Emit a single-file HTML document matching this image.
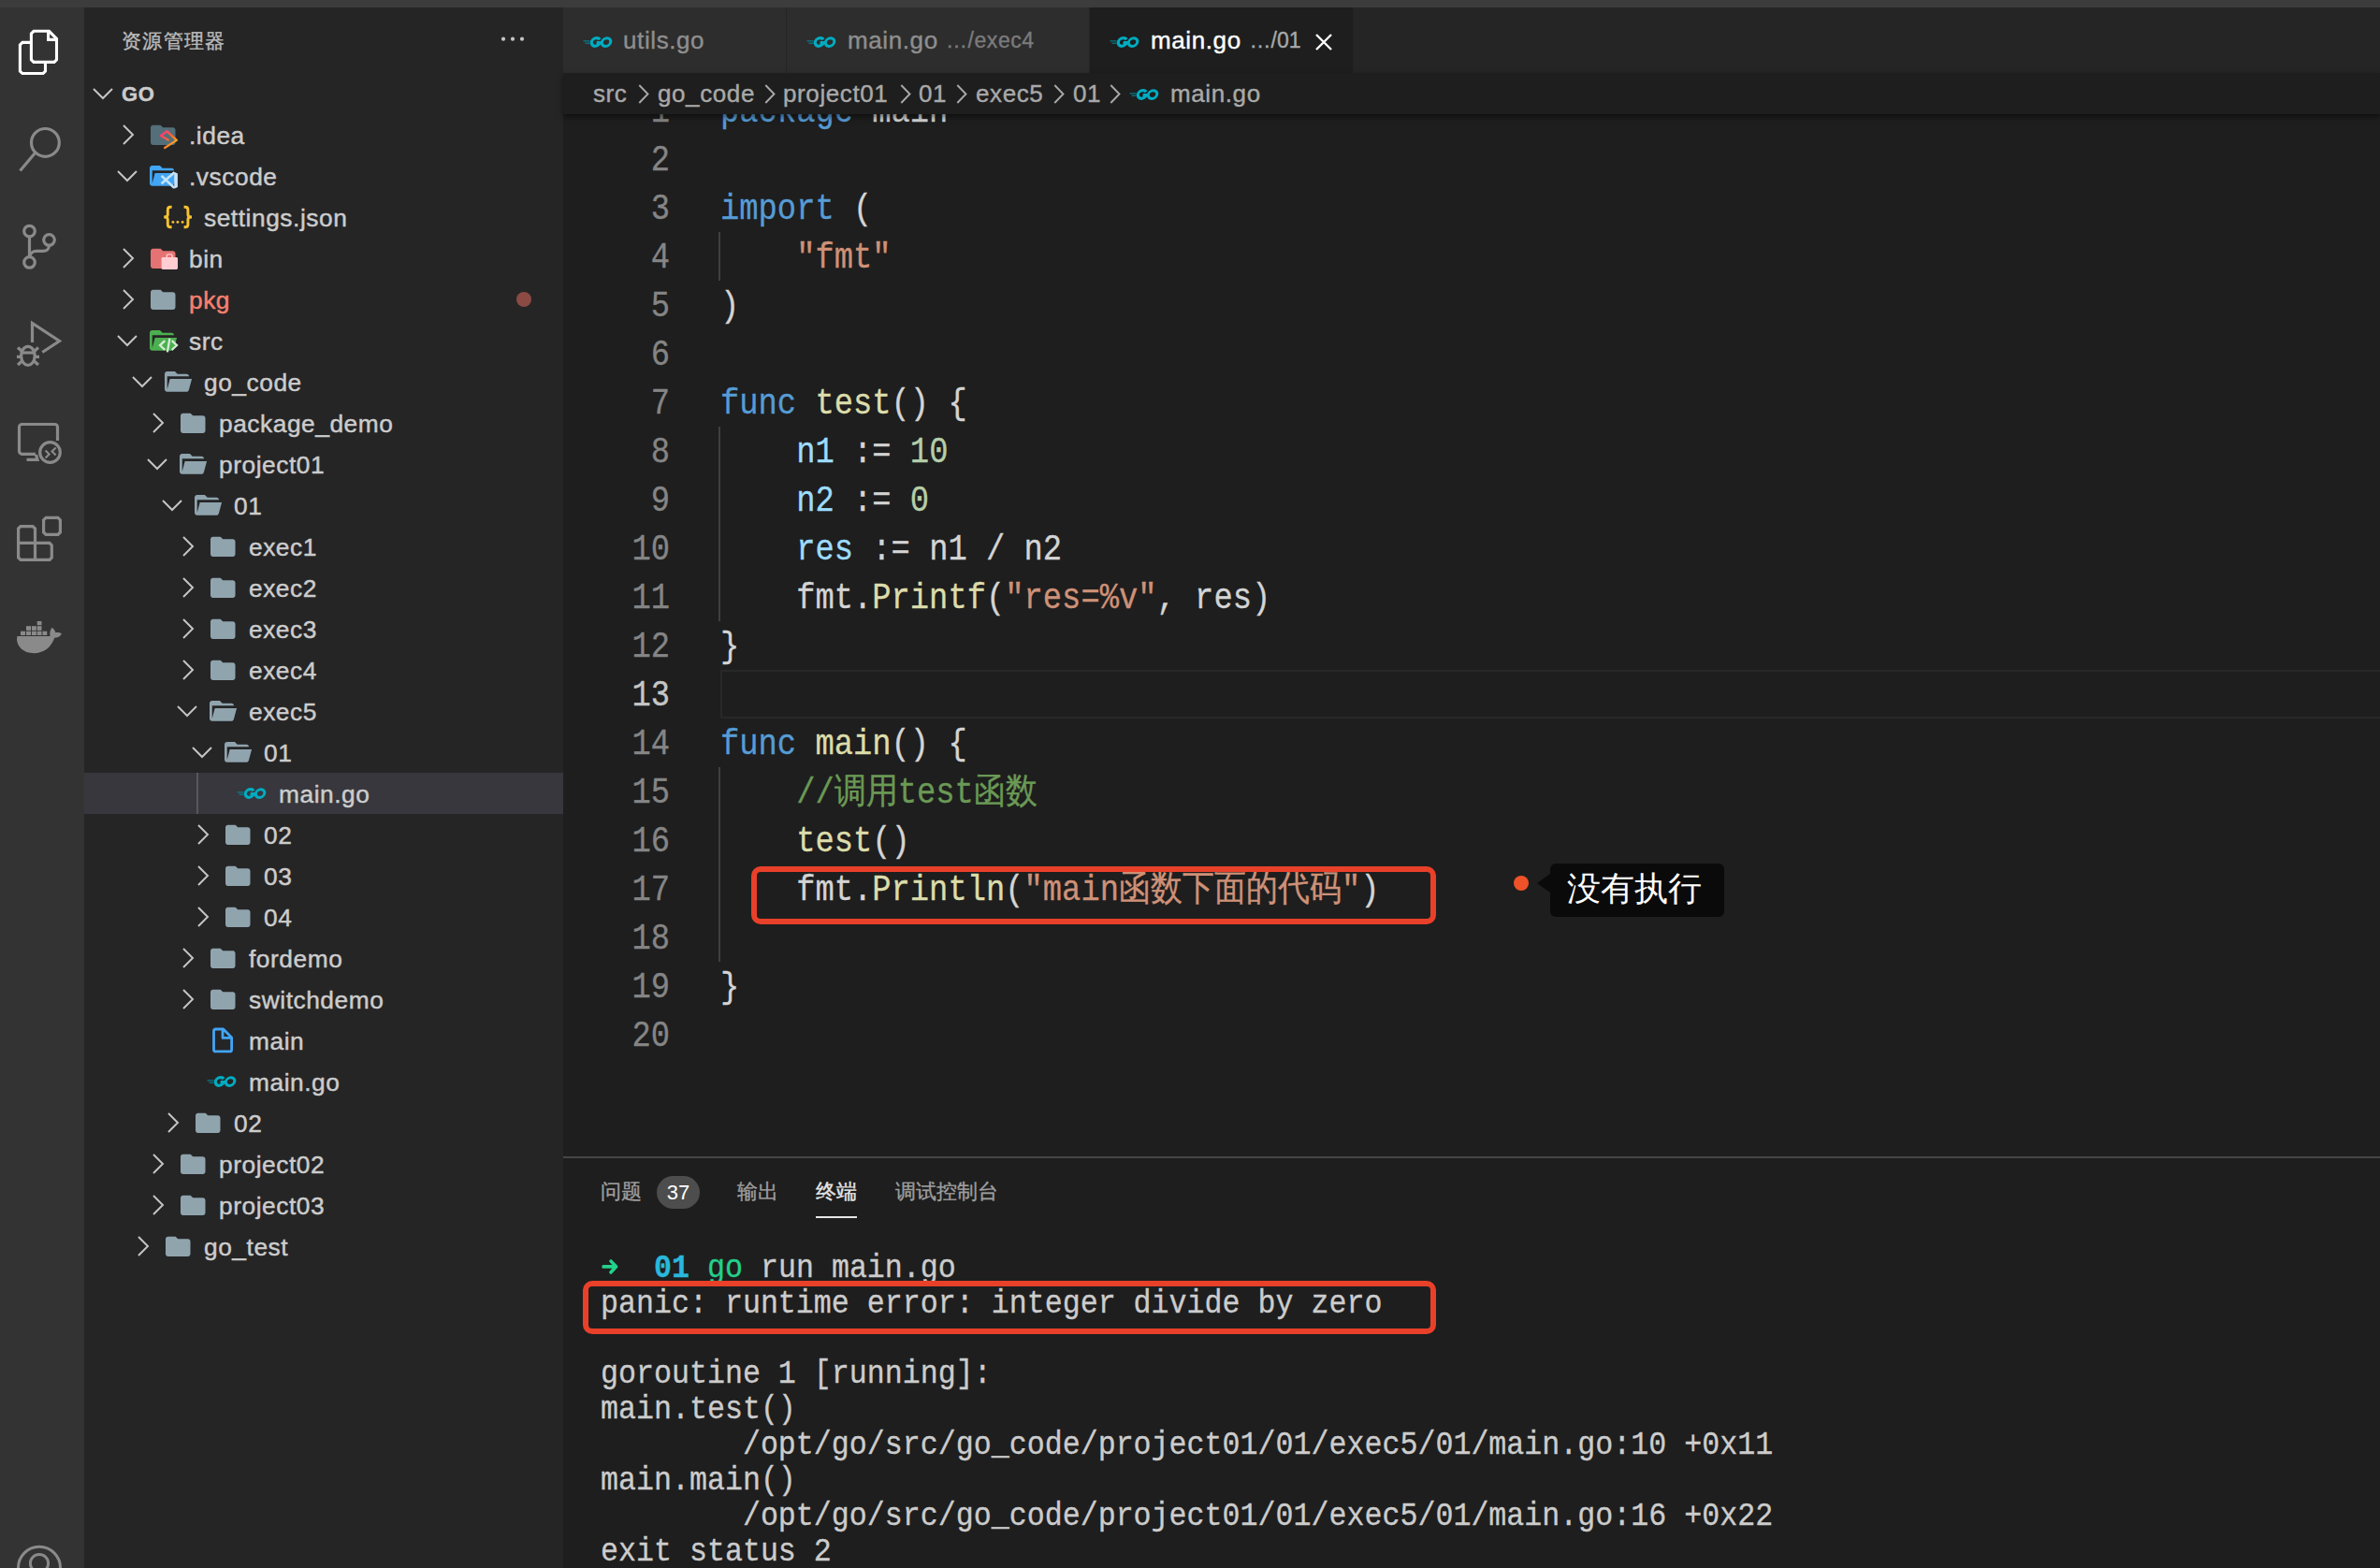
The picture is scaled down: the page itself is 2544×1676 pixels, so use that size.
<!DOCTYPE html>
<html><head><meta charset="utf-8"><style>
*{box-sizing:border-box}
html,body{margin:0;padding:0;width:2544px;height:1676px;overflow:hidden;background:#1e1e1e;font-family:"Liberation Sans",sans-serif}
.abs{position:absolute}
#topbar{position:absolute;left:0;top:0;width:2544px;height:8px;background:#3c3c3c}
#act{position:absolute;left:0;top:8px;width:90px;height:1668px;background:#333333}
#act svg{position:absolute}
#side{position:absolute;left:90px;top:8px;width:512px;height:1668px;background:#252526;overflow:hidden}
.row{position:absolute;left:90px;width:512px;height:44px}
.row.sel{background:#37373d}
.row span{position:absolute}
.ch svg,.ic svg{display:block}
.lbl{top:1px;line-height:44px;font-size:26.3px;letter-spacing:0.55px;color:#cccccc;white-space:nowrap;-webkit-text-stroke:0.45px currentColor}
.guide{left:120px;top:0;width:2px;height:44px;background:#585858}
.dot{left:462px;top:14px;width:16px;height:16px;border-radius:50%;background:#8b4a44}
.jsonic{color:#f5c033;font-size:30px;font-family:"Liberation Mono",monospace;letter-spacing:-2px;line-height:36px}
#tabs{position:absolute;left:602px;top:8px;width:1942px;height:70px;background:#252526}
.tab{position:absolute;top:0;height:70px;background:#2d2d2d}
.tab span,.tab svg{position:absolute}
.tabt{font-size:26px;letter-spacing:0.6px;line-height:70px;top:0;white-space:nowrap;-webkit-text-stroke:0.4px currentColor}
#crumbs{position:absolute;left:602px;top:78px;width:1942px;height:44px;background:#1e1e1e;z-index:3;box-shadow:0 3px 6px rgba(0,0,0,0.5)}
#crumbs span,#crumbs svg{position:absolute}
.cr{font-size:26px;letter-spacing:0.6px;line-height:44px;top:0;color:#a9a9a9;white-space:nowrap;-webkit-text-stroke:0.4px currentColor}
#editor{position:absolute;left:602px;top:122px;width:1942px;height:1114px;overflow:hidden;background:#1e1e1e}
.ln{position:absolute;left:0;width:114px;text-align:right;font-family:"Liberation Mono",monospace;font-size:33.8px;line-height:52px;height:52px;color:#858585;margin-top:-122px;transform:scaleY(1.12);transform-origin:0 35.3px;-webkit-text-stroke:0.3px currentColor}
.ln.act{color:#c6c6c6}
.cl{position:absolute;left:168px;font-family:"Liberation Mono",monospace;font-size:33.8px;line-height:52px;height:52px;color:#d4d4d4;white-space:pre;margin-top:-122px;transform:scaleY(1.12);transform-origin:0 35.3px;-webkit-text-stroke:0.3px currentColor}
#panel{position:absolute;left:602px;top:1236px;width:1942px;height:440px;background:#1e1e1e;border-top:2px solid #464646}
#panel span{position:absolute;white-space:pre}
.term{position:absolute;left:40px;height:38px;font-family:"Liberation Mono",monospace;font-size:31.65px;line-height:38px;color:#cccccc;white-space:pre;transform:scaleY(1.1);transform-origin:0 27.4px;-webkit-text-stroke:0.3px currentColor}
</style></head><body>
<div id="topbar"></div>
<div id="act">
<svg style="left:0;top:0" width="90" height="1668" viewBox="0 8 90 1668">
<g fill="none" stroke="#ffffff" stroke-width="3.1" stroke-linejoin="miter">
<path d="M36 33.3 H52.5 L60.5 41.3 V63.9 L58 66.4 H36 L33.4 63.9 V35.9 Z"/>
<path d="M51.6 33.3 V42.4 H60.5"/>
<path d="M33.4 45.4 H24 L21.4 48 V76 L24 78.5 H46 L48.5 76 V66.4"/>
</g>
<g fill="none" stroke="#8a8a8a" stroke-width="3.2">
<circle cx="48.4" cy="152.4" r="14.9"/>
<path d="M37.5 163.5 L21.5 182.5"/>
<circle cx="31.5" cy="247.1" r="5.8"/>
<circle cx="31.5" cy="280.4" r="5.8"/>
<circle cx="52.5" cy="256.4" r="5.8"/>
<path d="M31.5 253 V274.5"/>
<path d="M52.5 262.3 C52.5 266 50 268.4 46 268.4 H39 C35 268.4 32 271 32 274.5"/>
<path d="M34.5 366 V345.5 L63.5 364.5 L45.3 376.5"/>
<ellipse cx="29.9" cy="380.3" rx="7.3" ry="10"/>
<path d="M22 377 H37.8"/>
<path d="M19 371.5 L23.5 375.5 M41 371.5 L36.5 375.5 M18 381.3 H22 M38 381.3 H42 M19 390 L23.5 386 M41 390 L36.5 386"/>
<path d="M38 485.3 H23.5 a3 3 0 0 1 -3 -3 V456.5 a3 3 0 0 1 3 -3 H58.5 a3 3 0 0 1 3 3 V471"/>
<path d="M38.5 486 L40 491.3 H28.5"/>
<circle cx="53.5" cy="483.5" r="10.8"/>
<path d="M48.6 481.5 L52.6 485.5 L48.6 489.5 M59.6 478.5 L55.6 482.5 L59.6 486.5" stroke-width="2.2"/>
<path d="M19.6 565 L22 562.6 H35 L37.5 565 V580.4 H53 L55.3 582.8 V596 L53 598.4 H22 L19.6 596 Z"/>
<path d="M19.6 580.4 H37.5 V598.4"/>
<path d="M49 553.4 H62 L64.4 555.8 V569 L62 571.4 H49 L46.6 569 V555.8 Z"/>
</g>
<g fill="#8a8a8a">
<path d="M18.5 680 H53.6 C53 677.5 53.2 673.8 55.5 670.7 C57.5 672.3 59.2 674 59.3 676.2 C61.5 675.8 64 676 66 677.2 C64.5 680.5 61.5 681.8 58.3 681.8 C54.5 692.5 46.5 698.2 36.3 698.2 C24.5 698.2 18 690.5 18 683 Z"/>
<rect x="22" y="674.7" width="5" height="4.3"/><rect x="28" y="674.7" width="5" height="4.3"/><rect x="33.9" y="674.7" width="5" height="4.3"/><rect x="39.7" y="674.7" width="4.8" height="4.3"/><rect x="45.5" y="674.7" width="4.8" height="4.3"/>
<rect x="28" y="669.2" width="5" height="4.6"/><rect x="33.9" y="669.2" width="5" height="4.6"/><rect x="39.7" y="669.2" width="4.8" height="4.6"/>
<rect x="39.7" y="664" width="4.8" height="4.2"/>
</g>
<g fill="none" stroke="#8a8a8a" stroke-width="3">
<circle cx="42" cy="1675.8" r="22.5"/>
<circle cx="42" cy="1671" r="9.6"/>
</g>
</svg>

</div>
<div id="side">
<span class="abs" style="left:40px;top:22px;font-size:21px;color:#bbbbbb;letter-spacing:1.35px;-webkit-text-stroke:0.4px currentColor">资源管理器</span>
<svg class="abs" style="left:444px;top:30px" width="30" height="8" viewBox="0 0 30 8"><g fill="#c5c5c5"><circle cx="4" cy="3.7" r="2.1"/><circle cx="14" cy="3.7" r="2.1"/><circle cx="24" cy="3.7" r="2.1"/></g></svg>
<div class="row" style="top:70px;left:0">
<span class="ch" style="left:9px;top:15px"><svg class="chev" width="22" height="14" viewBox="0 0 22 14"><path d="M1 2 L11 12 L21 2" fill="none" stroke="#c5c5c5" stroke-width="1.95"/></svg></span>
<span class="lbl" style="left:40px;font-weight:bold;font-size:22px">GO</span>
</div>
<div style="position:absolute;left:-90px;top:-8px;width:602px">
<div class="row" style="top:122px"><span class="ch" style="left:40px;top:11px"><svg class="chev" width="14" height="22" viewBox="0 0 14 22"><path d="M2 1 L12 11 L2 21" fill="none" stroke="#c5c5c5" stroke-width="1.95"/></svg></span><span class="ic" style="left:71px;top:10.7px"><svg width="26.5" height="22" viewBox="2 3.5 20 16.5" preserveAspectRatio="none"><path d="M10 4H4c-1.1 0-2 .9-2 2v12c0 1.1.9 2 2 2h16c1.1 0 2-.9 2-2V8c0-1.1-.9-2-2-2h-8l-2-2z" fill="#546e7a"/></svg></span><span style="left:70px;top:0"><svg width="40" height="44" viewBox="160 122 40 44" style="display:block;overflow:visible"><defs><linearGradient id="ideag" x1="0" y1="0" x2="1" y2="1"><stop offset="0" stop-color="#ff2e8a"/><stop offset="0.5" stop-color="#ff6a2a"/><stop offset="1" stop-color="#ffd01a"/></linearGradient></defs><path d="M179.7 149.6 L171.8 145.1 L178.5 140.3 L188.8 149.9 L176.1 158" fill="none" stroke="url(#ideag)" stroke-width="2.3" stroke-linejoin="round" stroke-linecap="round"/></svg></span><span class="lbl" style="left:112px">.idea</span></div>
<div class="row" style="top:166px"><span class="ch" style="left:35px;top:15px"><svg class="chev" width="22" height="14" viewBox="0 0 22 14"><path d="M1 2 L11 12 L21 2" fill="none" stroke="#c5c5c5" stroke-width="1.95"/></svg></span><span class="ic" style="left:70px;top:10.4px"><svg width="29" height="23" viewBox="2 3.5 21.2 16.5"><path d="M19 20H4c-1.11 0-2-.9-2-2V6c0-1.11.89-2 2-2h6l2 2h7a2 2 0 0 1 2 2H4v10l2.14-8h17.07l-2.28 8.5c-.23.87-1.01 1.5-1.93 1.5z" fill="#42a5f5"/></svg></span><span style="left:70px;top:0"><svg width="40" height="44" viewBox="160 166 40 44" style="display:block;overflow:visible"><path d="M186.2 183.8 L189.9 185.6 V199.9 L186.2 201.7 Z" fill="#c6e3fa"/><path d="M172.6 187.9 L186.2 200.8 M172.6 196.3 L186.4 184.3" stroke="#c6e3fa" stroke-width="2.6"/></svg></span><span class="lbl" style="left:112px">.vscode</span></div>
<div class="row" style="top:210px"><span class="ic" style="left:84px;top:9px"><svg width="34" height="28" viewBox="0 0 34 28"><g fill="none" stroke="#f7c22f" stroke-width="2.9"><path d="M9.6 2.3 H8.2 C6.1 2.3 5.3 3.3 5.3 5.3 V10.6 C5.3 12.1 4.2 13 1.2 13 C4.2 13 5.3 13.9 5.3 15.4 V20.9 C5.3 22.9 6.1 23.7 8.2 23.7 H9.6"/><path d="M 22.6 2.3 H 24 C 26.1 2.3 26.9 3.3 26.9 5.3 V 10.6 C 26.9 12.1 28 13 31 13 C 28 13 26.9 13.9 26.9 15.4 V 20.9 C 26.9 22.9 26.1 23.7 24 23.7 H 22.6"/></g><g fill="#f7c22f"><circle cx="10.9" cy="18.4" r="1.45"/><circle cx="15.9" cy="18.4" r="1.45"/><circle cx="21.1" cy="18.4" r="1.45"/></g></svg></span><span class="lbl" style="left:128px">settings.json</span></div>
<div class="row" style="top:254px"><span class="ch" style="left:40px;top:11px"><svg class="chev" width="14" height="22" viewBox="0 0 14 22"><path d="M2 1 L12 11 L2 21" fill="none" stroke="#c5c5c5" stroke-width="1.95"/></svg></span><span class="ic" style="left:71px;top:10.7px"><svg width="26.5" height="22" viewBox="2 3.5 20 16.5" preserveAspectRatio="none"><path d="M10 4H4c-1.1 0-2 .9-2 2v12c0 1.1.9 2 2 2h16c1.1 0 2-.9 2-2V8c0-1.1-.9-2-2-2h-8l-2-2z" fill="#e57373"/></svg></span><span style="left:70px;top:0"><svg width="40" height="44" viewBox="160 254 40 44" style="display:block;overflow:visible"><rect x="172.6" y="274.9" width="17.4" height="13" rx="1.4" fill="#ffcdd2"/><rect x="178.3" y="271.9" width="5.8" height="4.2" rx="1.6" fill="none" stroke="#ffcdd2" stroke-width="1.4"/></svg></span><span class="lbl" style="left:112px">bin</span></div>
<div class="row" style="top:298px"><span class="ch" style="left:40px;top:11px"><svg class="chev" width="14" height="22" viewBox="0 0 14 22"><path d="M2 1 L12 11 L2 21" fill="none" stroke="#c5c5c5" stroke-width="1.95"/></svg></span><span class="ic" style="left:71px;top:10.7px"><svg width="26.5" height="22" viewBox="2 3.5 20 16.5" preserveAspectRatio="none"><path d="M10 4H4c-1.1 0-2 .9-2 2v12c0 1.1.9 2 2 2h16c1.1 0 2-.9 2-2V8c0-1.1-.9-2-2-2h-8l-2-2z" fill="#90a4ae"/></svg></span><span class="lbl" style="left:112px;color:#f88070">pkg</span><span class="dot"></span></div>
<div class="row" style="top:342px"><span class="ch" style="left:35px;top:15px"><svg class="chev" width="22" height="14" viewBox="0 0 22 14"><path d="M1 2 L11 12 L21 2" fill="none" stroke="#c5c5c5" stroke-width="1.95"/></svg></span><span class="ic" style="left:70px;top:10.4px"><svg width="29" height="23" viewBox="2 3.5 21.2 16.5"><path d="M19 20H4c-1.11 0-2-.9-2-2V6c0-1.11.89-2 2-2h6l2 2h7a2 2 0 0 1 2 2H4v10l2.14-8h17.07l-2.28 8.5c-.23.87-1.01 1.5-1.93 1.5z" fill="#4caf50"/></svg></span><span style="left:70px;top:0"><svg width="40" height="44" viewBox="160 342 40 44" style="display:block;overflow:visible"><path d="M176.3 364.2 L171 369.1 L176.3 374 M181.4 361.8 L178.9 376.4 M183.7 364.2 L189 369.1 L183.7 374" fill="none" stroke="#d4ecd5" stroke-width="2.3"/></svg></span><span class="lbl" style="left:112px">src</span></div>
<div class="row" style="top:386px"><span class="ch" style="left:51px;top:15px"><svg class="chev" width="22" height="14" viewBox="0 0 22 14"><path d="M1 2 L11 12 L21 2" fill="none" stroke="#c5c5c5" stroke-width="1.95"/></svg></span><span class="ic" style="left:86px;top:10.4px"><svg width="29" height="23" viewBox="2 3.5 21.2 16.5"><path d="M19 20H4c-1.11 0-2-.9-2-2V6c0-1.11.89-2 2-2h6l2 2h7a2 2 0 0 1 2 2H4v10l2.14-8h17.07l-2.28 8.5c-.23.87-1.01 1.5-1.93 1.5z" fill="#90a4ae"/></svg></span><span class="lbl" style="left:128px">go_code</span></div>
<div class="row" style="top:430px"><span class="ch" style="left:72px;top:11px"><svg class="chev" width="14" height="22" viewBox="0 0 14 22"><path d="M2 1 L12 11 L2 21" fill="none" stroke="#c5c5c5" stroke-width="1.95"/></svg></span><span class="ic" style="left:103px;top:10.7px"><svg width="26.5" height="22" viewBox="2 3.5 20 16.5" preserveAspectRatio="none"><path d="M10 4H4c-1.1 0-2 .9-2 2v12c0 1.1.9 2 2 2h16c1.1 0 2-.9 2-2V8c0-1.1-.9-2-2-2h-8l-2-2z" fill="#90a4ae"/></svg></span><span class="lbl" style="left:144px">package_demo</span></div>
<div class="row" style="top:474px"><span class="ch" style="left:67px;top:15px"><svg class="chev" width="22" height="14" viewBox="0 0 22 14"><path d="M1 2 L11 12 L21 2" fill="none" stroke="#c5c5c5" stroke-width="1.95"/></svg></span><span class="ic" style="left:102px;top:10.4px"><svg width="29" height="23" viewBox="2 3.5 21.2 16.5"><path d="M19 20H4c-1.11 0-2-.9-2-2V6c0-1.11.89-2 2-2h6l2 2h7a2 2 0 0 1 2 2H4v10l2.14-8h17.07l-2.28 8.5c-.23.87-1.01 1.5-1.93 1.5z" fill="#90a4ae"/></svg></span><span class="lbl" style="left:144px">project01</span></div>
<div class="row" style="top:518px"><span class="ch" style="left:83px;top:15px"><svg class="chev" width="22" height="14" viewBox="0 0 22 14"><path d="M1 2 L11 12 L21 2" fill="none" stroke="#c5c5c5" stroke-width="1.95"/></svg></span><span class="ic" style="left:118px;top:10.4px"><svg width="29" height="23" viewBox="2 3.5 21.2 16.5"><path d="M19 20H4c-1.11 0-2-.9-2-2V6c0-1.11.89-2 2-2h6l2 2h7a2 2 0 0 1 2 2H4v10l2.14-8h17.07l-2.28 8.5c-.23.87-1.01 1.5-1.93 1.5z" fill="#90a4ae"/></svg></span><span class="lbl" style="left:160px">01</span></div>
<div class="row" style="top:562px"><span class="ch" style="left:104px;top:11px"><svg class="chev" width="14" height="22" viewBox="0 0 14 22"><path d="M2 1 L12 11 L2 21" fill="none" stroke="#c5c5c5" stroke-width="1.95"/></svg></span><span class="ic" style="left:135px;top:10.7px"><svg width="26.5" height="22" viewBox="2 3.5 20 16.5" preserveAspectRatio="none"><path d="M10 4H4c-1.1 0-2 .9-2 2v12c0 1.1.9 2 2 2h16c1.1 0 2-.9 2-2V8c0-1.1-.9-2-2-2h-8l-2-2z" fill="#90a4ae"/></svg></span><span class="lbl" style="left:176px">exec1</span></div>
<div class="row" style="top:606px"><span class="ch" style="left:104px;top:11px"><svg class="chev" width="14" height="22" viewBox="0 0 14 22"><path d="M2 1 L12 11 L2 21" fill="none" stroke="#c5c5c5" stroke-width="1.95"/></svg></span><span class="ic" style="left:135px;top:10.7px"><svg width="26.5" height="22" viewBox="2 3.5 20 16.5" preserveAspectRatio="none"><path d="M10 4H4c-1.1 0-2 .9-2 2v12c0 1.1.9 2 2 2h16c1.1 0 2-.9 2-2V8c0-1.1-.9-2-2-2h-8l-2-2z" fill="#90a4ae"/></svg></span><span class="lbl" style="left:176px">exec2</span></div>
<div class="row" style="top:650px"><span class="ch" style="left:104px;top:11px"><svg class="chev" width="14" height="22" viewBox="0 0 14 22"><path d="M2 1 L12 11 L2 21" fill="none" stroke="#c5c5c5" stroke-width="1.95"/></svg></span><span class="ic" style="left:135px;top:10.7px"><svg width="26.5" height="22" viewBox="2 3.5 20 16.5" preserveAspectRatio="none"><path d="M10 4H4c-1.1 0-2 .9-2 2v12c0 1.1.9 2 2 2h16c1.1 0 2-.9 2-2V8c0-1.1-.9-2-2-2h-8l-2-2z" fill="#90a4ae"/></svg></span><span class="lbl" style="left:176px">exec3</span></div>
<div class="row" style="top:694px"><span class="ch" style="left:104px;top:11px"><svg class="chev" width="14" height="22" viewBox="0 0 14 22"><path d="M2 1 L12 11 L2 21" fill="none" stroke="#c5c5c5" stroke-width="1.95"/></svg></span><span class="ic" style="left:135px;top:10.7px"><svg width="26.5" height="22" viewBox="2 3.5 20 16.5" preserveAspectRatio="none"><path d="M10 4H4c-1.1 0-2 .9-2 2v12c0 1.1.9 2 2 2h16c1.1 0 2-.9 2-2V8c0-1.1-.9-2-2-2h-8l-2-2z" fill="#90a4ae"/></svg></span><span class="lbl" style="left:176px">exec4</span></div>
<div class="row" style="top:738px"><span class="ch" style="left:99px;top:15px"><svg class="chev" width="22" height="14" viewBox="0 0 22 14"><path d="M1 2 L11 12 L21 2" fill="none" stroke="#c5c5c5" stroke-width="1.95"/></svg></span><span class="ic" style="left:134px;top:10.4px"><svg width="29" height="23" viewBox="2 3.5 21.2 16.5"><path d="M19 20H4c-1.11 0-2-.9-2-2V6c0-1.11.89-2 2-2h6l2 2h7a2 2 0 0 1 2 2H4v10l2.14-8h17.07l-2.28 8.5c-.23.87-1.01 1.5-1.93 1.5z" fill="#90a4ae"/></svg></span><span class="lbl" style="left:176px">exec5</span></div>
<div class="row" style="top:782px"><span class="ch" style="left:115px;top:15px"><svg class="chev" width="22" height="14" viewBox="0 0 22 14"><path d="M1 2 L11 12 L21 2" fill="none" stroke="#c5c5c5" stroke-width="1.95"/></svg></span><span class="ic" style="left:150px;top:10.4px"><svg width="29" height="23" viewBox="2 3.5 21.2 16.5"><path d="M19 20H4c-1.11 0-2-.9-2-2V6c0-1.11.89-2 2-2h6l2 2h7a2 2 0 0 1 2 2H4v10l2.14-8h17.07l-2.28 8.5c-.23.87-1.01 1.5-1.93 1.5z" fill="#90a4ae"/></svg></span><span class="lbl" style="left:192px">01</span></div>
<div class="row sel" style="top:826px"><span class="ic" style="left:163px;top:15px"><svg width="34" height="14" viewBox="0 0 34 14"><path d="M0.5 5.9h7M2.5 8.2h5" stroke="#0090a0" stroke-width="1.0"/><g transform="skewX(-10)" fill="none" stroke="#00acc1" stroke-width="3.1"><ellipse cx="26.3" cy="7.1" rx="4.7" ry="4.35"/><path d="M18.9 4.2 A4.7 4.35 0 1 0 19.9 7.6 H15.9"/></g></svg></span><span class="lbl" style="left:208px">main.go</span><span class="guide"></span></div>
<div class="row" style="top:870px"><span class="ch" style="left:120px;top:11px"><svg class="chev" width="14" height="22" viewBox="0 0 14 22"><path d="M2 1 L12 11 L2 21" fill="none" stroke="#c5c5c5" stroke-width="1.95"/></svg></span><span class="ic" style="left:151px;top:10.7px"><svg width="26.5" height="22" viewBox="2 3.5 20 16.5" preserveAspectRatio="none"><path d="M10 4H4c-1.1 0-2 .9-2 2v12c0 1.1.9 2 2 2h16c1.1 0 2-.9 2-2V8c0-1.1-.9-2-2-2h-8l-2-2z" fill="#90a4ae"/></svg></span><span class="lbl" style="left:192px">02</span></div>
<div class="row" style="top:914px"><span class="ch" style="left:120px;top:11px"><svg class="chev" width="14" height="22" viewBox="0 0 14 22"><path d="M2 1 L12 11 L2 21" fill="none" stroke="#c5c5c5" stroke-width="1.95"/></svg></span><span class="ic" style="left:151px;top:10.7px"><svg width="26.5" height="22" viewBox="2 3.5 20 16.5" preserveAspectRatio="none"><path d="M10 4H4c-1.1 0-2 .9-2 2v12c0 1.1.9 2 2 2h16c1.1 0 2-.9 2-2V8c0-1.1-.9-2-2-2h-8l-2-2z" fill="#90a4ae"/></svg></span><span class="lbl" style="left:192px">03</span></div>
<div class="row" style="top:958px"><span class="ch" style="left:120px;top:11px"><svg class="chev" width="14" height="22" viewBox="0 0 14 22"><path d="M2 1 L12 11 L2 21" fill="none" stroke="#c5c5c5" stroke-width="1.95"/></svg></span><span class="ic" style="left:151px;top:10.7px"><svg width="26.5" height="22" viewBox="2 3.5 20 16.5" preserveAspectRatio="none"><path d="M10 4H4c-1.1 0-2 .9-2 2v12c0 1.1.9 2 2 2h16c1.1 0 2-.9 2-2V8c0-1.1-.9-2-2-2h-8l-2-2z" fill="#90a4ae"/></svg></span><span class="lbl" style="left:192px">04</span></div>
<div class="row" style="top:1002px"><span class="ch" style="left:104px;top:11px"><svg class="chev" width="14" height="22" viewBox="0 0 14 22"><path d="M2 1 L12 11 L2 21" fill="none" stroke="#c5c5c5" stroke-width="1.95"/></svg></span><span class="ic" style="left:135px;top:10.7px"><svg width="26.5" height="22" viewBox="2 3.5 20 16.5" preserveAspectRatio="none"><path d="M10 4H4c-1.1 0-2 .9-2 2v12c0 1.1.9 2 2 2h16c1.1 0 2-.9 2-2V8c0-1.1-.9-2-2-2h-8l-2-2z" fill="#90a4ae"/></svg></span><span class="lbl" style="left:176px">fordemo</span></div>
<div class="row" style="top:1046px"><span class="ch" style="left:104px;top:11px"><svg class="chev" width="14" height="22" viewBox="0 0 14 22"><path d="M2 1 L12 11 L2 21" fill="none" stroke="#c5c5c5" stroke-width="1.95"/></svg></span><span class="ic" style="left:135px;top:10.7px"><svg width="26.5" height="22" viewBox="2 3.5 20 16.5" preserveAspectRatio="none"><path d="M10 4H4c-1.1 0-2 .9-2 2v12c0 1.1.9 2 2 2h16c1.1 0 2-.9 2-2V8c0-1.1-.9-2-2-2h-8l-2-2z" fill="#90a4ae"/></svg></span><span class="lbl" style="left:176px">switchdemo</span></div>
<div class="row" style="top:1090px"><span class="ic" style="left:136px;top:8px"><svg width="24" height="29" viewBox="0 0 24 29"><path d="M4.5 2 H12.7 L21.6 10.9 V23.9 Q21.6 25.9 19.6 25.9 H4.5 Q2.5 25.9 2.5 23.9 V4 Q2.5 2 4.5 2 Z M12 2.5 V11.4 H21.6" fill="none" stroke="#42a5f5" stroke-width="2.8" stroke-linejoin="round"/></svg></span><span class="lbl" style="left:176px">main</span></div>
<div class="row" style="top:1134px"><span class="ic" style="left:131px;top:15px"><svg width="34" height="14" viewBox="0 0 34 14"><path d="M0.5 5.9h7M2.5 8.2h5" stroke="#0090a0" stroke-width="1.0"/><g transform="skewX(-10)" fill="none" stroke="#00acc1" stroke-width="3.1"><ellipse cx="26.3" cy="7.1" rx="4.7" ry="4.35"/><path d="M18.9 4.2 A4.7 4.35 0 1 0 19.9 7.6 H15.9"/></g></svg></span><span class="lbl" style="left:176px">main.go</span></div>
<div class="row" style="top:1178px"><span class="ch" style="left:88px;top:11px"><svg class="chev" width="14" height="22" viewBox="0 0 14 22"><path d="M2 1 L12 11 L2 21" fill="none" stroke="#c5c5c5" stroke-width="1.95"/></svg></span><span class="ic" style="left:119px;top:10.7px"><svg width="26.5" height="22" viewBox="2 3.5 20 16.5" preserveAspectRatio="none"><path d="M10 4H4c-1.1 0-2 .9-2 2v12c0 1.1.9 2 2 2h16c1.1 0 2-.9 2-2V8c0-1.1-.9-2-2-2h-8l-2-2z" fill="#90a4ae"/></svg></span><span class="lbl" style="left:160px">02</span></div>
<div class="row" style="top:1222px"><span class="ch" style="left:72px;top:11px"><svg class="chev" width="14" height="22" viewBox="0 0 14 22"><path d="M2 1 L12 11 L2 21" fill="none" stroke="#c5c5c5" stroke-width="1.95"/></svg></span><span class="ic" style="left:103px;top:10.7px"><svg width="26.5" height="22" viewBox="2 3.5 20 16.5" preserveAspectRatio="none"><path d="M10 4H4c-1.1 0-2 .9-2 2v12c0 1.1.9 2 2 2h16c1.1 0 2-.9 2-2V8c0-1.1-.9-2-2-2h-8l-2-2z" fill="#90a4ae"/></svg></span><span class="lbl" style="left:144px">project02</span></div>
<div class="row" style="top:1266px"><span class="ch" style="left:72px;top:11px"><svg class="chev" width="14" height="22" viewBox="0 0 14 22"><path d="M2 1 L12 11 L2 21" fill="none" stroke="#c5c5c5" stroke-width="1.95"/></svg></span><span class="ic" style="left:103px;top:10.7px"><svg width="26.5" height="22" viewBox="2 3.5 20 16.5" preserveAspectRatio="none"><path d="M10 4H4c-1.1 0-2 .9-2 2v12c0 1.1.9 2 2 2h16c1.1 0 2-.9 2-2V8c0-1.1-.9-2-2-2h-8l-2-2z" fill="#90a4ae"/></svg></span><span class="lbl" style="left:144px">project03</span></div>
<div class="row" style="top:1310px"><span class="ch" style="left:56px;top:11px"><svg class="chev" width="14" height="22" viewBox="0 0 14 22"><path d="M2 1 L12 11 L2 21" fill="none" stroke="#c5c5c5" stroke-width="1.95"/></svg></span><span class="ic" style="left:87px;top:10.7px"><svg width="26.5" height="22" viewBox="2 3.5 20 16.5" preserveAspectRatio="none"><path d="M10 4H4c-1.1 0-2 .9-2 2v12c0 1.1.9 2 2 2h16c1.1 0 2-.9 2-2V8c0-1.1-.9-2-2-2h-8l-2-2z" fill="#90a4ae"/></svg></span><span class="lbl" style="left:128px">go_test</span></div>
</div>
</div>
<div id="tabs">
<div class="tab" style="left:0;width:238px">
<span style="left:21px;top:30px"><svg width="34" height="14" viewBox="0 0 34 14"><path d="M0.5 5.9h7M2.5 8.2h5" stroke="#0090a0" stroke-width="1.0"/><g transform="skewX(-10)" fill="none" stroke="#00acc1" stroke-width="3.1"><ellipse cx="26.3" cy="7.1" rx="4.7" ry="4.35"/><path d="M18.9 4.2 A4.7 4.35 0 1 0 19.9 7.6 H15.9"/></g></svg></span>
<span class="tabt" style="left:64px;color:#8e8e8e">utils.go</span>
</div>
<div class="tab" style="left:239px;width:323px">
<span style="left:260px;top:30px;left:21px"><svg width="34" height="14" viewBox="0 0 34 14"><path d="M0.5 5.9h7M2.5 8.2h5" stroke="#0090a0" stroke-width="1.0"/><g transform="skewX(-10)" fill="none" stroke="#00acc1" stroke-width="3.1"><ellipse cx="26.3" cy="7.1" rx="4.7" ry="4.35"/><path d="M18.9 4.2 A4.7 4.35 0 1 0 19.9 7.6 H15.9"/></g></svg></span>
<span class="tabt" style="left:65px;color:#8e8e8e">main.go</span>
<span class="tabt" style="left:170px;color:#7b7b7b;font-size:23px;letter-spacing:0.55px">…/exec4</span>
</div>
<div class="tab" style="left:563px;width:281px;background:#1e1e1e">
<span style="top:30px;left:21px"><svg width="34" height="14" viewBox="0 0 34 14"><path d="M0.5 5.9h7M2.5 8.2h5" stroke="#0090a0" stroke-width="1.0"/><g transform="skewX(-10)" fill="none" stroke="#00acc1" stroke-width="3.1"><ellipse cx="26.3" cy="7.1" rx="4.7" ry="4.35"/><path d="M18.9 4.2 A4.7 4.35 0 1 0 19.9 7.6 H15.9"/></g></svg></span>
<span class="tabt" style="left:65px;color:#ffffff">main.go</span>
<span class="tabt" style="left:170.5px;color:#a8a8a8;font-size:23px;letter-spacing:0px">…/01</span>
<svg style="left:241px;top:28px" width="18" height="18" viewBox="0 0 18 18"><path d="M1 1 L17 17 M17 1 L1 17" stroke="#ffffff" stroke-width="2.4"/></svg>
</div>

</div>
<div id="crumbs">
<span class="cr" style="left:32px">src</span>
<svg style="left:80px;top:12px" width="12" height="21" viewBox="0 0 12 21"><path d="M1.3 1 L10.5 10.5 L1.3 20" fill="none" stroke="#a9a9a9" stroke-width="1.9"/></svg>
<span class="cr" style="left:101px">go_code</span>
<svg style="left:215px;top:12px" width="12" height="21" viewBox="0 0 12 21"><path d="M1.3 1 L10.5 10.5 L1.3 20" fill="none" stroke="#a9a9a9" stroke-width="1.9"/></svg>
<span class="cr" style="left:235px">project01</span>
<svg style="left:359.5px;top:12px" width="12" height="21" viewBox="0 0 12 21"><path d="M1.3 1 L10.5 10.5 L1.3 20" fill="none" stroke="#a9a9a9" stroke-width="1.9"/></svg>
<span class="cr" style="left:380px">01</span>
<svg style="left:419.5px;top:12px" width="12" height="21" viewBox="0 0 12 21"><path d="M1.3 1 L10.5 10.5 L1.3 20" fill="none" stroke="#a9a9a9" stroke-width="1.9"/></svg>
<span class="cr" style="left:441px">exec5</span>
<svg style="left:523.5px;top:12px" width="12" height="21" viewBox="0 0 12 21"><path d="M1.3 1 L10.5 10.5 L1.3 20" fill="none" stroke="#a9a9a9" stroke-width="1.9"/></svg>
<span class="cr" style="left:545px">01</span>
<svg style="left:583.5px;top:12px" width="12" height="21" viewBox="0 0 12 21"><path d="M1.3 1 L10.5 10.5 L1.3 20" fill="none" stroke="#a9a9a9" stroke-width="1.9"/></svg>
<span style="left:604.5px;top:16px"><svg width="34" height="14" viewBox="0 0 34 14"><path d="M0.5 5.9h7M2.5 8.2h5" stroke="#0090a0" stroke-width="1.0"/><g transform="skewX(-10)" fill="none" stroke="#00acc1" stroke-width="3.1"><ellipse cx="26.3" cy="7.1" rx="4.7" ry="4.35"/><path d="M18.9 4.2 A4.7 4.35 0 1 0 19.9 7.6 H15.9"/></g></svg></span>
<span class="cr" style="left:649px">main.go</span>

</div>
<div id="editor">
<div style="position:absolute;left:168px;top:594px;width:1780px;height:52px;border:2px solid #282828;border-right:none"></div>
<div style="position:absolute;left:166px;top:125.7px;width:2px;height:52px;background:#404040"></div><div style="position:absolute;left:166px;top:333.7px;width:2px;height:208px;background:#404040"></div><div style="position:absolute;left:166px;top:697.7px;width:2px;height:208px;background:#404040"></div>
<div class="ln" style="top:94.6px">1</div><div class="cl" style="top:94.6px"><span style="color:#569cd6">package</span> main</div>
<div class="ln" style="top:146.6px">2</div><div class="cl" style="top:146.6px"></div>
<div class="ln" style="top:198.6px">3</div><div class="cl" style="top:198.6px"><span style="color:#569cd6">import</span> (</div>
<div class="ln" style="top:250.6px">4</div><div class="cl" style="top:250.6px">    <span style="color:#ce9178">"fmt"</span></div>
<div class="ln" style="top:302.6px">5</div><div class="cl" style="top:302.6px">)</div>
<div class="ln" style="top:354.6px">6</div><div class="cl" style="top:354.6px"></div>
<div class="ln" style="top:406.6px">7</div><div class="cl" style="top:406.6px"><span style="color:#569cd6">func</span> <span style="color:#dcdcaa">test</span>() {</div>
<div class="ln" style="top:458.6px">8</div><div class="cl" style="top:458.6px">    <span style="color:#9cdcfe">n1</span> := <span style="color:#b5cea8">10</span></div>
<div class="ln" style="top:510.6px">9</div><div class="cl" style="top:510.6px">    <span style="color:#9cdcfe">n2</span> := <span style="color:#b5cea8">0</span></div>
<div class="ln" style="top:562.6px">10</div><div class="cl" style="top:562.6px">    <span style="color:#9cdcfe">res</span> := n1 / n2</div>
<div class="ln" style="top:614.6px">11</div><div class="cl" style="top:614.6px">    fmt.<span style="color:#dcdcaa">Printf</span>(<span style="color:#ce9178">"res=%v"</span>, res)</div>
<div class="ln" style="top:666.6px">12</div><div class="cl" style="top:666.6px">}</div>
<div class="ln act" style="top:718.6px">13</div><div class="cl" style="top:718.6px"></div>
<div class="ln" style="top:770.6px">14</div><div class="cl" style="top:770.6px"><span style="color:#569cd6">func</span> <span style="color:#dcdcaa">main</span>() {</div>
<div class="ln" style="top:822.6px">15</div><div class="cl" style="top:822.6px">    <span style="color:#6a9955">//调用test函数</span></div>
<div class="ln" style="top:874.6px">16</div><div class="cl" style="top:874.6px">    <span style="color:#dcdcaa">test</span>()</div>
<div class="ln" style="top:926.6px">17</div><div class="cl" style="top:926.6px">    fmt.<span style="color:#dcdcaa">Println</span>(<span style="color:#ce9178">"main函数下面的代码"</span>)</div>
<div class="ln" style="top:978.6px">18</div><div class="cl" style="top:978.6px"></div>
<div class="ln" style="top:1030.6px">19</div><div class="cl" style="top:1030.6px">}</div>
<div class="ln" style="top:1082.6px">20</div><div class="cl" style="top:1082.6px"></div>
<div style="position:absolute;left:200.9px;top:803.8px;width:732.1px;height:62.2px;border:6.4px solid #e9402a;border-radius:10px"></div>
<div style="position:absolute;left:1015.9px;top:813.9px;width:16px;height:16px;border-radius:50%;background:#ef5228"></div>
<div style="position:absolute;left:1055px;top:800.9px;width:186px;height:57px;background:#0a0a0a;border-radius:6px"></div>
<div style="position:absolute;left:1040.5px;top:811.9px;width:0;height:0;border-top:10px solid transparent;border-bottom:10px solid transparent;border-right:14.5px solid #0a0a0a"></div>
<span style="position:absolute;left:1073px;top:799px;line-height:57px;font-size:36px;color:#ffffff;white-space:nowrap">没有执行</span>

</div>
<div id="panel">
<span style="left:40px;top:17px;line-height:38px;font-size:22.3px;color:#9d9d9d;-webkit-text-stroke:0.35px currentColor">问题</span>
<span style="left:100px;top:18.5px;width:46px;height:35.5px;border-radius:18px;background:#4d4d4d;color:#ffffff;font-size:22px;line-height:35.5px;text-align:center">37</span>
<span style="left:186px;top:17px;line-height:38px;font-size:22.3px;color:#9d9d9d;-webkit-text-stroke:0.35px currentColor">输出</span>
<span style="left:270px;top:17px;line-height:38px;font-size:22.3px;color:#e7e7e7;-webkit-text-stroke:0.35px currentColor">终端</span>
<span style="left:270px;top:61.8px;width:44px;height:2.2px;background:#e7e7e7"></span>
<span style="left:355px;top:17px;line-height:38px;font-size:22.3px;color:#9d9d9d;-webkit-text-stroke:0.35px currentColor">调试控制台</span>
<div class="term" style="top:99.7px"><svg style="position:static;vertical-align:0px" width="19" height="20" viewBox="0 0 19 20"><path d="M3 10 H15.5 M11 4.6 L16.6 10 L11 15.4" fill="none" stroke="#23d18b" stroke-width="3.4" stroke-linecap="round" stroke-linejoin="round"/></svg>  <span style="position:static;color:#29b8db;font-weight:bold">01</span> <span style="position:static;color:#23d18b">go</span> run main.go</div>
<div class="term" style="top:137.6px">panic: runtime error: integer divide by zero</div>
<div class="term" style="top:213.4px">goroutine 1 [running]:</div>
<div class="term" style="top:251.3px">main.test()</div>
<div class="term" style="top:289.2px">        /opt/go/src/go_code/project01/01/exec5/01/main.go:10 +0x11</div>
<div class="term" style="top:327.1px">main.main()</div>
<div class="term" style="top:365.0px">        /opt/go/src/go_code/project01/01/exec5/01/main.go:16 +0x22</div>
<div class="term" style="top:402.9px">exit status 2</div>
<div style="position:absolute;left:20.9px;top:130.6px;width:912.1px;height:57.4px;border:6.5px solid #e9402a;border-radius:10px"></div>

</div>
</body></html>
